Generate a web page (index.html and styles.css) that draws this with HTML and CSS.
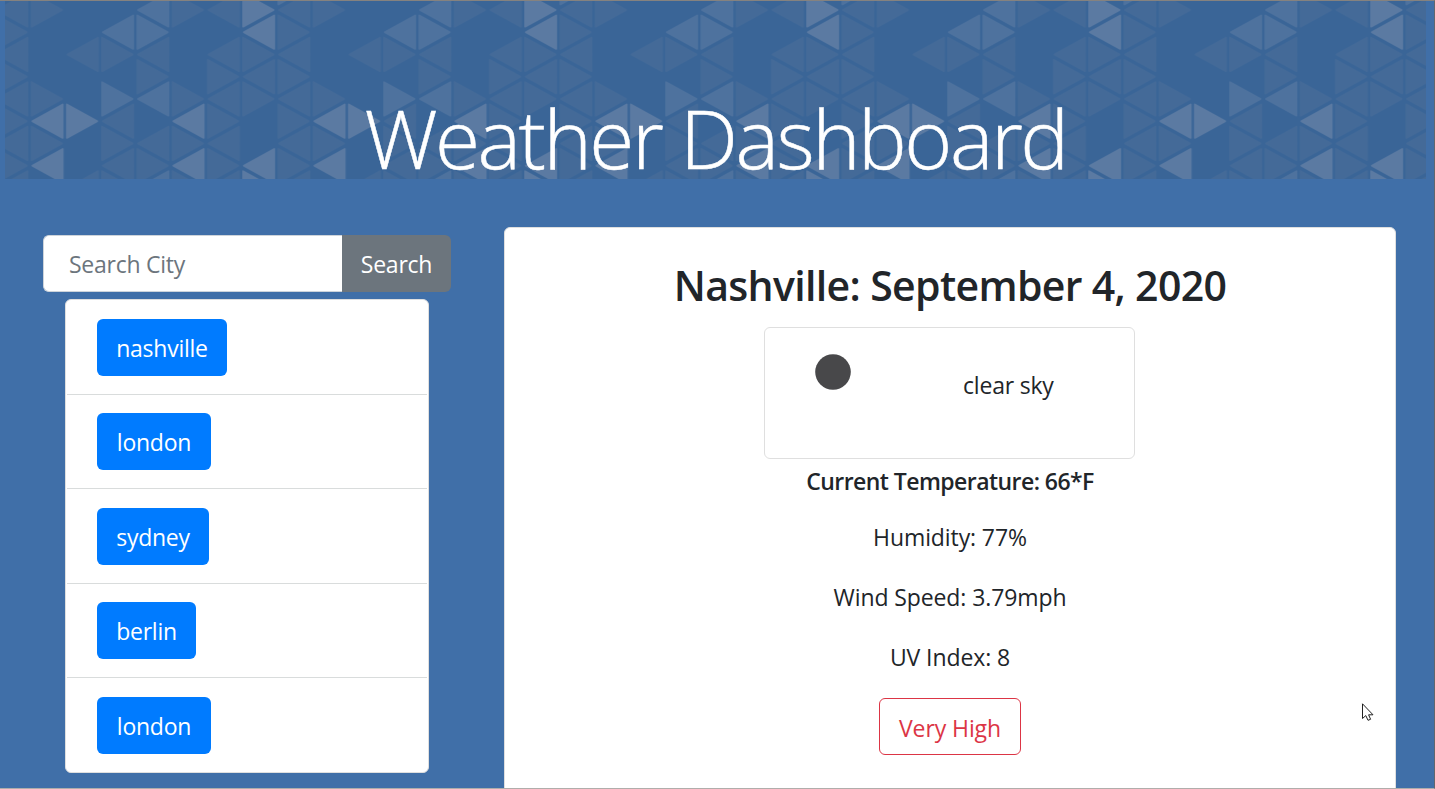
FILE: index.html
```
<!DOCTYPE html>
<html lang="en">
<head>
<meta charset="utf-8">
<title>Weather Dashboard</title>
<link rel="stylesheet" href="styles.css">
</head>
<body>
<header class="banner">
  <svg class="banner-art" width="1421" height="178" viewBox="5 1 1421 178" aria-hidden="true">
    <defs>
      <path id="l" d="M2.8 0 33.3 -16.8V16.8Z"/>
      <path id="r" d="M32.6 0 2.1 -16.8V16.8Z"/>
      <pattern id="tri" x="-5.75" y="0" width="282" height="190" patternUnits="userSpaceOnUse">
        <g id="tiles"></g>
      </pattern>
    </defs>
    <rect x="5" y="1" width="1421" height="178" fill="#3a6597"/>
    <rect x="5" y="1" width="1421" height="178" fill="url(#tri)"/>
  </svg>
  <h1 class="title">Weather Dashboard</h1>
</header>
<main class="layout">
  <aside class="sidebar">
    <form class="search">
      <input class="search-input" type="text" placeholder="Search City">
      <button class="search-btn" type="button">Search</button>
    </form>
    <ul class="cities">
      <li><button class="city w-nashville">nashville</button></li>
      <li><button class="city w-london">london</button></li>
      <li><button class="city w-sydney">sydney</button></li>
      <li><button class="city w-berlin">berlin</button></li>
      <li><button class="city w-london">london</button></li>
    </ul>
  </aside>
  <section class="card">
    <h2 class="heading">Nashville: September 4, 2020</h2>
    <div class="sky">
      <svg class="sun" width="36" height="36" viewBox="0 0 36 36"><circle cx="18" cy="18" r="17.8" fill="#48484a"/></svg>
      <span class="sky-text">clear sky</span>
    </div>
    <p class="temp">Current Temperature: 66*F</p>
    <p class="line humidity">Humidity: 77%</p>
    <p class="line wind">Wind Speed: 3.79mph</p>
    <p class="line uv">UV Index: 8</p>
    <button class="risk">Very High</button>
  </section>
</main>
<svg class="cursor" width="13" height="19" viewBox="0 0 13 19"><path d="M1.5 .8V15.5L4.8 12.6 7 17.3 9.6 16.3 7.6 11.8H12Z" fill="#fff" stroke="#222" stroke-width="1"/></svg>
<script src="app.js"></script>
</body>
</html>
```
FILE: styles.css
```
* { box-sizing: border-box; }
body {
  margin: 0;
  height: 789px;
  overflow: hidden;
  background: #406fa8;
  border-top: 1px solid #85827f;
  border-right: 1px solid #62666c;
  border-bottom: 1px solid #b0adab;
  font-family: "Open Sans", "Noto Sans", sans-serif;
  font-size: 23px;
  color: #212529;
}
button, input { font: inherit; letter-spacing: inherit; }
.banner { position: relative; height: 178px; margin: 0 8px 0 5px; }
.banner-art { position: absolute; left: 0; top: 0; }
.title {
  position: relative;
  margin: 0;
  padding-top: 79px;
  line-height: 114px;
  text-align: center;
  color: #fff;
  font-size: 82px;
  font-weight: 300;
  letter-spacing: -2.5px;
  -webkit-text-stroke: .5px #fff;
  white-space: nowrap;
}
.tri-low { fill: #446a98; stroke: #446a98; }
.tri-mid { fill: #4e729e; stroke: #4e729e; }
.tri-high { fill: #5b7aa2; stroke: #5b7aa2; }
.tri-low, .tri-mid, .tri-high { stroke-width: 1.6px; stroke-linejoin: round; }
.layout { display: flex; align-items: flex-start; padding: 48px 38px 0 43px; }
.sidebar { width: 408px; padding-top: 8px; letter-spacing: -.25px; }
.search { display: flex; margin: 0 0 7px; height: 57px; }
.search-input {
  width: 299px;
  padding: 1px 25px 0;
  border: 1px solid #ced4da;
  border-right: 0;
  border-radius: 6px 0 0 6px;
  background: #fff;
}
.search-input::placeholder { color: #6c757d; opacity: 1; }
.search-btn {
  width: 109px;
  padding: 1px 0 0;
  border: 0;
  border-radius: 0 6px 6px 0;
  background: #6c757d;
  color: #fff;
}
.cities {
  width: 364px;
  height: 474px;
  margin: 0 0 0 22px;
  padding: 0 1px;
  list-style: none;
  background: #fff;
  border: 1px solid #dfdfdf;
  border-radius: 6px;
}
.cities li { height: 94.5px; padding: 18.7px 0 0 30px; border-bottom: 1px solid #d9dcdc; }
.cities li:last-child { border-bottom: 0; }
.city {
  display: block;
  height: 57px;
  padding: 1px 0 0;
  border: 0;
  border-radius: 6px;
  background: #007bff;
  color: #fff;
}
.w-nashville { width: 130px; }
.w-london { width: 114px; }
.w-sydney { width: 112px; }
.w-berlin { width: 99px; }
.card {
  display: flex;
  flex-direction: column;
  align-items: center;
  width: 892px;
  height: 600px;
  margin-left: 53px;
  padding-top: 32px;
  background: #fff;
  border: 1px solid #dfdfdf;
  border-radius: 6px;
  letter-spacing: -.1px;
}
.heading { margin: 0 0 17px; line-height: 50px; font-size: 41px; font-weight: 600; letter-spacing: -.65px; white-space: nowrap; }
.sky {
  display: flex;
  width: 371px;
  height: 132px;
  margin-right: 1px;
  padding: 26px 0 0 50px;
  border: 1px solid #dfdfdf;
  border-radius: 6px;
}
.sun { flex: none; }
.sky-text { margin: 13px 0 0 112px; line-height: 36px; letter-spacing: -.2px; white-space: nowrap; }
.temp, .line { margin: 0; line-height: 36px; white-space: nowrap; }
.temp { margin-top: 4px; font-weight: 600; letter-spacing: -.55px; }
.humidity { margin-top: 20px; }
.wind, .uv { margin-top: 24px; }
.risk {
  width: 142px;
  height: 57px;
  margin-top: 23px;
  padding: 3px 0 0;
  border: 1px solid #dc3545;
  border-radius: 6px;
  background: #fff;
  color: #dc3545;
}
.cursor { position: absolute; left: 1361px; top: 703px; }
```
FILE: app.js
```
// Each column lists its triangles: direction, row, brightness.
const columns = [
  "r-1m l0w r1w l2w r3w l4w r5w l6w r7w l8w",
  "r0w r4w l5h r6w l7h",
  "l2w r5h l8w",
  "l1m r2w r4m l5w r6w l7w r8w",
  "l0m r1m l2w r3w l4m l6w r7w l8m",
  "r0w r4w l5h r6w l7h r8w",
  "l0w l2w r3w l4w r5w l6w r7w l8w",
  "r0h l1h r2w l3w r4w l7h r8h"
];
const shade = { w: "tri-low", m: "tri-mid", h: "tri-high" };
const group = document.getElementById("tiles");
columns.forEach((column, i) => {
  column.split(" ").forEach((entry) => {
    const [, dir, row, level] = entry.match(/([lr])(-?\d)(\w)/);
    const use = document.createElementNS("http://www.w3.org/2000/svg", "use");
    use.setAttribute("href", "#" + dir);
    use.setAttribute("x", i * 35.25);
    use.setAttribute("y", 10 + row * 22.25);
    use.setAttribute("class", shade[level]);
    group.appendChild(use);
  });
});
```
